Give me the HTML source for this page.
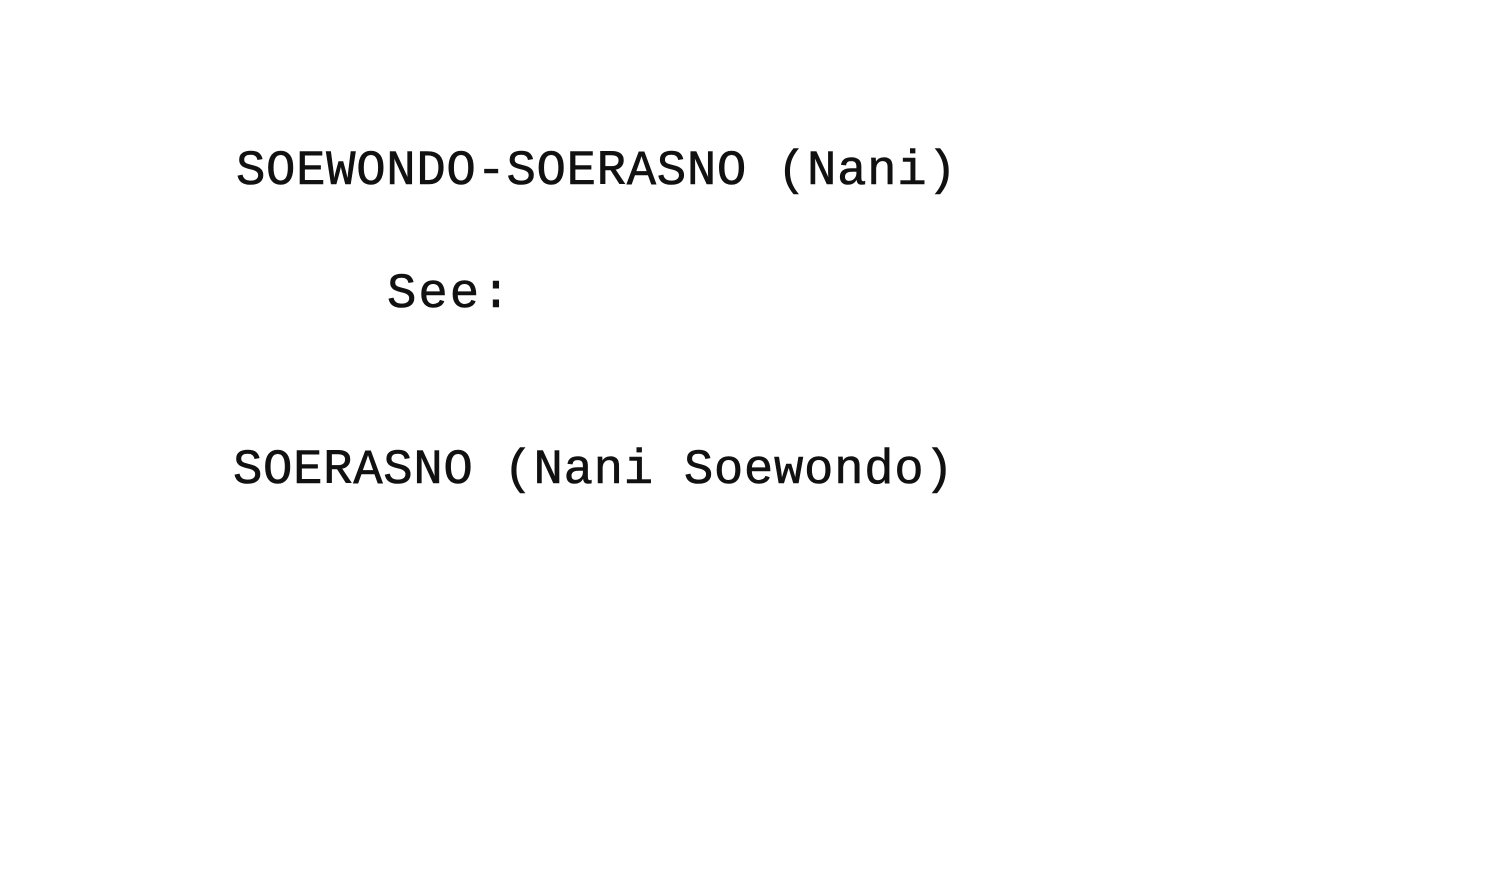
<!DOCTYPE html>
<html><head><meta charset="utf-8"><style>
html,body{margin:0;padding:0;background:#fff;width:1493px;height:896px;overflow:hidden;}
.t{position:absolute;font-family:"Liberation Mono",monospace;font-size:49px;line-height:1;color:#111;white-space:pre;letter-spacing:0.65px;-webkit-text-stroke:0.6px #111;}
</style></head><body>
<div class="t" style="left:236px;top:147px;">SOEWONDO-SOERASNO (Nani)</div>
<div class="t" style="left:387px;top:270px;letter-spacing:2px;">See:</div>
<div class="t" style="left:233px;top:446px;">SOERASNO (Nani Soewondo)</div>
</body></html>
